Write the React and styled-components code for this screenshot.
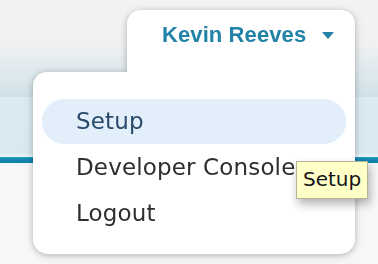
import React from "react";
import styled, { createGlobalStyle } from "styled-components";

const Global = createGlobalStyle`
  html, body { margin: 0; padding: 0; }
  body { width: 378px; height: 264px; overflow: hidden; background: #f6f8f9; }
`;

const Page = styled.div`
  position: relative;
  width: 378px;
  height: 264px;
  display: flex;
  flex-direction: column;
  overflow: hidden;
`;

const TopBar = styled.div`
  height: 97px;
  background: linear-gradient(180deg, #f3f3f3 0px, #f1f2f2 42px, #dae7ec 80px, #cfe1e8 97px);
`;

const SubBar = styled.div`
  height: 60px;
  background: linear-gradient(180deg, #dcebf2 0px, #d9e9f0 56px, #eef7fa 60px);
`;

const Rule = styled.div`
  height: 6px;
  background: linear-gradient(180deg, #2aa0c4 0px, #1389b2 2px, #117fa6 6px);
`;

const Body = styled.div`
  flex: 1;
  background: #f6f8f9;
`;

const Dropdown = styled.div`
  position: absolute;
  left: 33px;
  top: 10px;
  width: 322px;
  display: flex;
  flex-direction: column;
  align-items: flex-end;
  filter: drop-shadow(0 1px 3px rgba(0, 0, 0, 0.22)) drop-shadow(0 3px 6px rgba(0, 0, 0, 0.08));
`;

const Tab = styled.div`
  width: 228px;
  height: 63px;
  box-sizing: border-box;
  padding: 12px 21px 0 35px;
  background: #ffffff;
  border-radius: 14px 14px 0 0;
  display: flex;
  align-items: flex-start;
  justify-content: space-between;
  margin-bottom: -1px;
`;

const UserName = styled.span`
  font-family: "Liberation Sans", Arial, sans-serif;
  font-weight: bold;
  font-size: 22px;
  line-height: 26px;
  color: #2282a8;
  letter-spacing: 0.1px;
`;

const Caret = styled.svg`
  margin-top: 10px;
  flex: none;
`;

const Panel = styled.div`
  width: 322px;
  box-sizing: border-box;
  padding: 27px 9px 18px;
  background: #ffffff;
  border-radius: 14px 0 15px 15px;
  display: flex;
  flex-direction: column;
  gap: 1px;
`;

const Item = styled.div`
  height: 45px;
  line-height: 45px;
  padding-left: 34px;
  border-radius: 22px;
  font-family: "DejaVu Sans", Verdana, sans-serif;
  font-size: 23px;
  letter-spacing: 0.15px;
  color: ${(p) => (p.$active ? "#2a4a6c" : "#2c2e32")};
  background: ${(p) => (p.$active ? "#e2effa" : "transparent")};
  white-space: nowrap;
`;

const Tooltip = styled.div`
  position: absolute;
  left: 296px;
  top: 161px;
  height: 38px;
  box-sizing: border-box;
  padding: 0 6px 2px;
  display: flex;
  align-items: center;
  background: #ffffc8;
  border: 1px solid #b3b39a;
  font-family: "DejaVu Sans", Verdana, sans-serif;
  font-size: 20px;
  color: #151515;
  box-shadow: 2px 5px 9px rgba(0, 0, 0, 0.3);
`;

export default function App() {
  return (
    <Page>
      <Global />
      <TopBar />
      <SubBar />
      <Rule />
      <Body />
      <Dropdown>
        <Tab>
          <UserName>Kevin Reeves</UserName>
          <Caret width="12" height="8" viewBox="0 0 12 8">
            <path d="M0 0 L12 0 L6 7 Z" fill="#2282a8" />
          </Caret>
        </Tab>
        <Panel>
          <Item $active>Setup</Item>
          <Item>Developer Console</Item>
          <Item>Logout</Item>
        </Panel>
      </Dropdown>
      <Tooltip>Setup</Tooltip>
    </Page>
  );
}
